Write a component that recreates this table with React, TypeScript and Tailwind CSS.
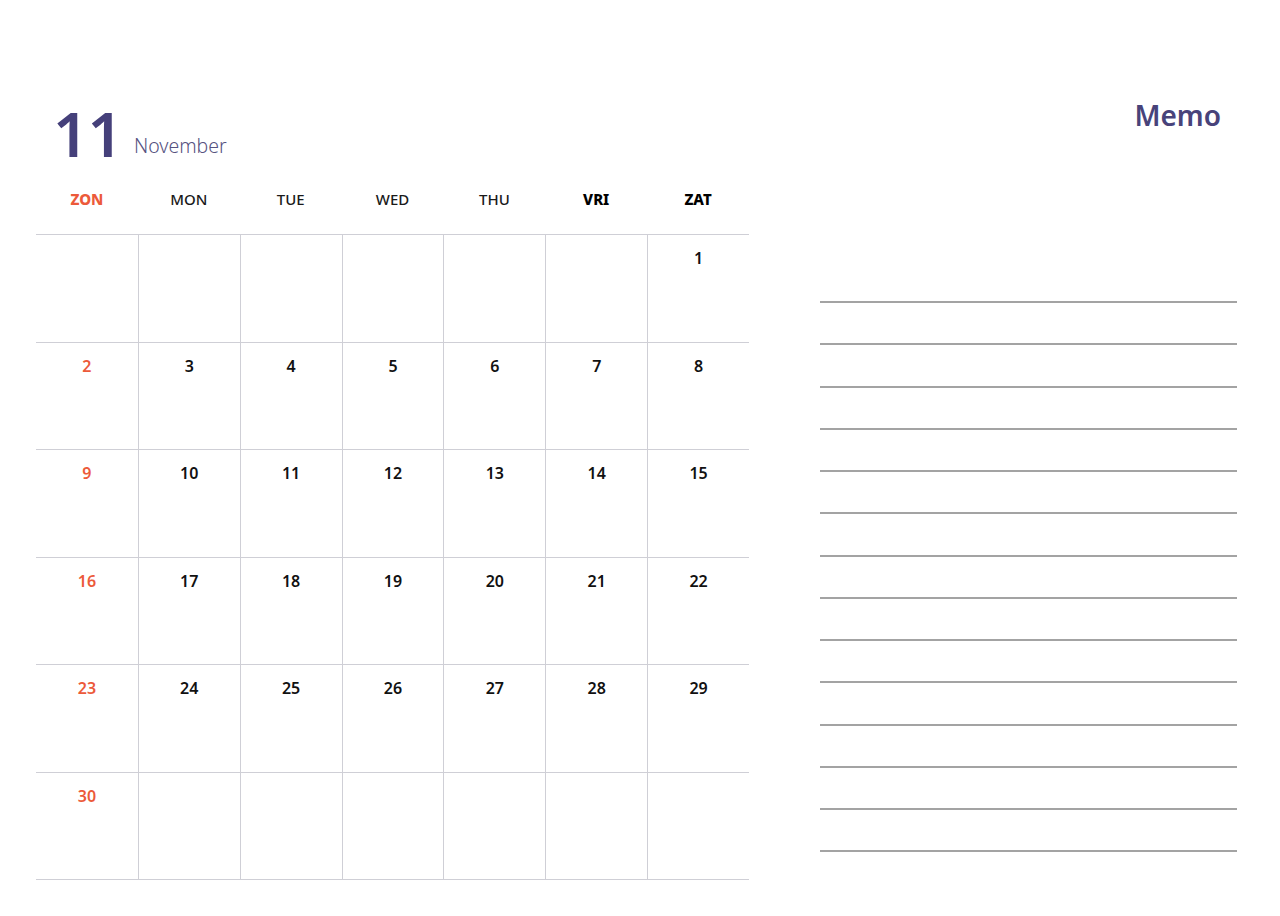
import React from 'react';

const days = [
  { label: 'ZON', cls: 'text-[#ec5a3a] font-extrabold' },
  { label: 'MON', cls: 'text-[#1a1a1a] font-medium' },
  { label: 'TUE', cls: 'text-[#1a1a1a] font-medium' },
  { label: 'WED', cls: 'text-[#1a1a1a] font-medium' },
  { label: 'THU', cls: 'text-[#1a1a1a] font-medium' },
  { label: 'VRI', cls: 'text-black font-extrabold' },
  { label: 'ZAT', cls: 'text-black font-extrabold' },
];

// November starts on Saturday, 30 days
const cells: (number | null)[] = [
  ...Array(6).fill(null),
  ...Array.from({ length: 30 }, (_, i) => i + 1),
];
while (cells.length < 42) cells.push(null);

export default function App() {
  return (
    <div className="w-[1280px] h-[916px] bg-white flex font-['Noto_Sans',sans-serif]">
      {/* Calendar */}
      <div className="ml-[36px] w-[713px] pt-[102px] flex flex-col">
        <div className="flex items-baseline h-[62px] pl-[17px]">
          <span className="text-[62px] leading-none font-semibold text-[#45407a] tracking-[-1px]">11</span>
          <span className="ml-[12px] text-[19.5px] font-light text-[#56527f] relative top-[-4px]">November</span>
        </div>

        <div className="grid grid-cols-7 h-[70px] items-center">
          {days.map((d) => (
            <div key={d.label} className={`text-center text-[15px] ${d.cls}`}>
              {d.label}
            </div>
          ))}
        </div>

        <div className="grid grid-cols-7 grid-rows-6 h-[646px] border-b border-[#cfcfd6]">
          {cells.map((n, i) => (
            <div
              key={i}
              className={`border-t border-[#cfcfd6] ${i % 7 === 0 ? '' : 'border-l'} pt-[11px] text-center`}
            >
              {n !== null && (
                <span
                  className={`text-[16px] leading-[20px] font-semibold ${i % 7 === 0 ? 'text-[#ec5a3a]' : 'text-[#111]'}`}
                >
                  {n}
                </span>
              )}
            </div>
          ))}
        </div>
      </div>

      {/* Memo */}
      <div className="ml-[71px] w-[417px] pt-[98px] flex flex-col">
        <div className="text-right pr-[16px] text-[28px] leading-[34px] font-semibold text-[#48437a]">Memo</div>
        <div className="mt-[169px] flex flex-col gap-[40.25px]">
          {Array.from({ length: 14 }, (_, i) => (
            <div key={i} className="h-[2px] bg-[#a3a3a3]" />
          ))}
        </div>
      </div>
    </div>
  );
}
